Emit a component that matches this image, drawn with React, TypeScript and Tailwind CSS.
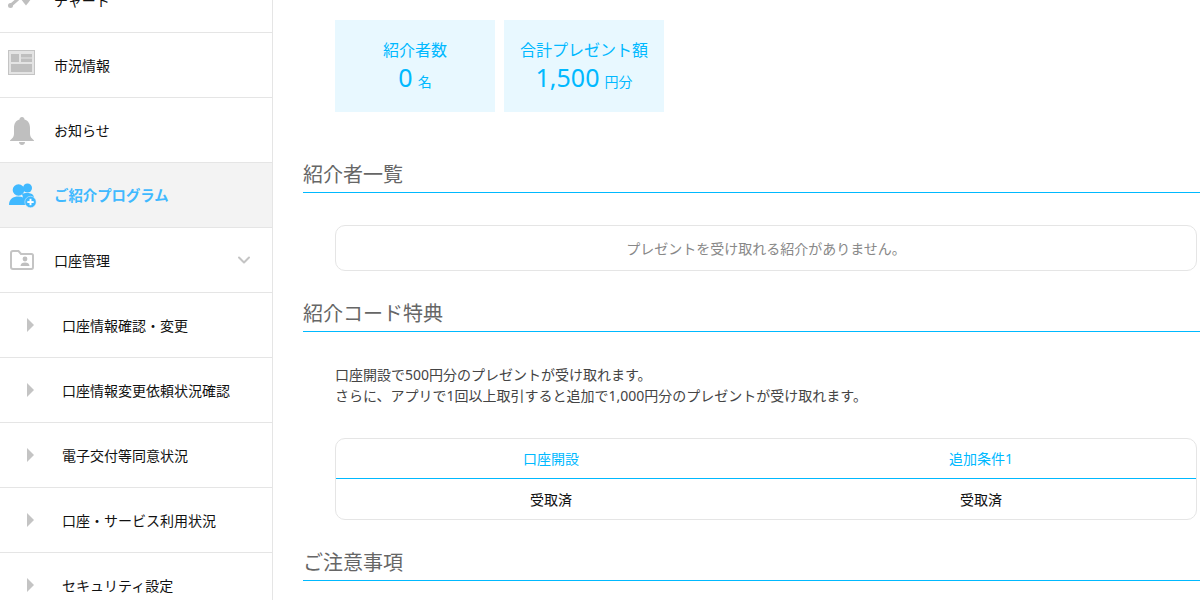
import React from 'react';
import { ChevronDown } from 'lucide-react';

const fontStack = "font-['Noto_Sans','Noto_Sans_CJK_JP',sans-serif]";

const ChartIcon = () => (
	<svg width="26" height="12" viewBox="0 0 26 12" fill="none">
		<path d="M2 6 L10 -1 M14 -2 L18 3 L22 -2" stroke="#bfbfbf" strokeWidth="3" />
		<circle cx="2.5" cy="5.5" r="2.5" fill="#bfbfbf" />
		<circle cx="18" cy="1" r="2.5" fill="#bfbfbf" />
	</svg>
);

const NewsIcon = () => (
	<svg width="27" height="25" viewBox="0 0 27 25">
		<rect x="0.5" y="0.5" width="26" height="24" fill="#e4e4e4" stroke="#c4c4c4" />
		<rect x="3" y="4" width="8" height="8" fill="#bfbfbf" />
		<rect x="13" y="4" width="11" height="3.5" fill="#bfbfbf" />
		<rect x="13" y="8.5" width="11" height="3.5" fill="#bfbfbf" />
		<rect x="3" y="14" width="21" height="8" fill="#bfbfbf" />
	</svg>
);

const BellIcon = () => (
	<svg width="24" height="28" viewBox="0 0 24 28">
		<path d="M12 0 C13.5 0 14.5 1 14.5 2.5 C18.5 3.5 20 7 20 11 L20 17 C20 20 22 21.5 24 23.5 L24 24 L0 24 L0 23.5 C2 21.5 4 20 4 17 L4 11 C4 7 5.5 3.5 9.5 2.5 C9.5 1 10.5 0 12 0 Z" fill="#bfbfbf" />
		<path d="M9 25 L15 25 C15 27 13.5 28 12 28 C10.5 28 9 27 9 25 Z" fill="#bfbfbf" />
	</svg>
);

const UsersPlusIcon = () => (
	<svg width="28" height="25" viewBox="0 0 28 25">
		<circle cx="18.5" cy="5" r="4.5" fill="#40b9ff" />
		<path d="M13 11 C16 9.5 22 9.5 24 12 C25 13.5 25 15 25 15 L15 18 Z" fill="#40b9ff" />
		<circle cx="9.5" cy="7" r="5.8" fill="#40b9ff" />
		<path d="M0 22 C0 16 4 13.5 9.5 13.5 C13 13.5 16 15 17 17 C17 19 16.5 21 17 22 Z" fill="#40b9ff" />
		<circle cx="21.5" cy="19" r="5.7" fill="#40b9ff" stroke="#f3f3f3" strokeWidth="0.5" />
		<rect x="18.3" y="18.1" width="6.4" height="1.9" fill="#fff" />
		<rect x="20.55" y="15.8" width="1.9" height="6.4" fill="#fff" />
	</svg>
);

const FolderIcon = () => (
	<svg width="24" height="20" viewBox="0 0 24 20" fill="none">
		<path d="M1 3 C1 1.8 1.8 1 3 1 L8.5 1 L11 4 L21.5 4 C22.5 4 23 4.5 23 5.5 L23 17 C23 18 22.5 19 21.5 19 L3 19 C1.8 19 1 18 1 17 Z" stroke="#c4c4c4" strokeWidth="2" />
		<circle cx="15" cy="9" r="2.4" fill="#bfbfbf" />
		<path d="M10.5 16 C10.5 13.5 12.5 12.5 15 12.5 C17.5 12.5 19.5 13.5 19.5 16 Z" fill="#bfbfbf" />
	</svg>
);

const Caret = () => <span className="block w-0 h-0 border-y-[7px] border-y-transparent border-l-[7px] border-l-[#c4c4c4]" />;

const MainRow = ({ icon, label, active, chevron }: { icon: React.ReactNode; label: string; active?: boolean; chevron?: boolean }) => (
	<div className={`h-[65px] flex items-center border-b border-[#e5e5e5] ${active ? 'bg-[#f3f3f3]' : ''}`}>
		<div className="w-[54px] pl-[8px] flex items-center justify-start shrink-0">{icon}</div>
		<span className={active ? 'pt-[2px] text-[14.4px] font-bold text-[#40b9ff]' : 'text-[14px] text-[#111]'}>{label}</span>
		{chevron && <ChevronDown className="ml-auto mr-[18px] text-[#c4c4c4]" size={20} strokeWidth={2.4} />}
	</div>
);

const SubRow = ({ label }: { label: string }) => (
	<div className="h-[65px] flex items-center border-b border-[#e5e5e5]">
		<div className="w-[62px] pl-[27px] shrink-0">
			<Caret />
		</div>
		<span className="text-[14px] text-[#111]">{label}</span>
	</div>
);

const Heading = ({ children, className }: { children: React.ReactNode; className?: string }) => (
	<h2 className={`h-[38px] pt-[6px] text-[20px] leading-[28px] text-[#666] border-b border-[#00b9ff] ${className ?? ''}`}>{children}</h2>
);

const StatCard = ({ title, value, unit }: { title: string; value: string; unit: string }) => (
	<div className="w-[160px] h-[92px] bg-[#e8f8ff] text-[#00b9ff] flex flex-col items-center pt-[19px]">
		<p className="text-[16px] leading-[22px]">{title}</p>
		<p className="leading-[34px] -mt-[1px]">
			<span className="text-[25px]">{value}</span>
			<span className="text-[14px] ml-[5px]">{unit}</span>
		</p>
	</div>
);

export default function App() {
	return (
		<div className={`w-[1200px] h-[600px] overflow-hidden flex bg-white ${fontStack}`}>
			<aside className="w-[273px] shrink-0 border-r border-[#e5e5e5] -mt-[32px]">
				<MainRow icon={<div className="pt-[12px]"><ChartIcon /></div>} label="チャート" />
				<MainRow icon={<div className="pb-[5px]"><NewsIcon /></div>} label="市況情報" />
				<MainRow icon={<div className="pl-[2px] pt-[2px]"><BellIcon /></div>} label="お知らせ" />
				<MainRow icon={<div className="pl-[1px]"><UsersPlusIcon /></div>} label="ご紹介プログラム" active />
				<MainRow icon={<div className="pl-[2px]"><FolderIcon /></div>} label="口座管理" chevron />
				<SubRow label="口座情報確認・変更" />
				<SubRow label="口座情報変更依頼状況確認" />
				<SubRow label="電子交付等同意状況" />
				<SubRow label="口座・サービス利用状況" />
				<SubRow label="セキュリティ設定" />
			</aside>

			<main className="flex-1 pl-[30px] pt-[20px]">
				<div className="flex gap-[9px] pl-[32px]">
					<StatCard title="紹介者数" value="0" unit="名" />
					<StatCard title="合計プレゼント額" value="1,500" unit="円分" />
				</div>

				<Heading className="mt-[43px]">紹介者一覧</Heading>
				<div className="ml-[32px] mr-[3px] mt-[32px] h-[46px] border border-[#e5e5e5] rounded-[10px] flex items-center justify-center text-[14px] text-[#888]">
					プレゼントを受け取れる紹介がありません。
				</div>

				<Heading className="mt-[23px]">紹介コード特典</Heading>
				<div className="ml-[32px] mt-[32px] text-[14px] leading-[21px] text-[#444]">
					<p>口座開設で500円分のプレゼントが受け取れます。</p>
					<p>さらに、アプリで1回以上取引すると追加で1,000円分のプレゼントが受け取れます。</p>
				</div>
				<div className="ml-[32px] mr-[3px] mt-[32px] h-[82px] border border-[#e5e5e5] rounded-[10px] overflow-hidden text-[14px]">
					<div className="grid grid-cols-2 h-[40px] items-center text-center text-[#00b9ff] border-b border-[#00b9ff]">
						<span>口座開設</span>
						<span>追加条件1</span>
					</div>
					<div className="grid grid-cols-2 h-[40px] items-center text-center text-[#111]">
						<span>受取済</span>
						<span>受取済</span>
					</div>
				</div>

				<Heading className="mt-[23px]">ご注意事項</Heading>
			</main>
		</div>
	);
}
